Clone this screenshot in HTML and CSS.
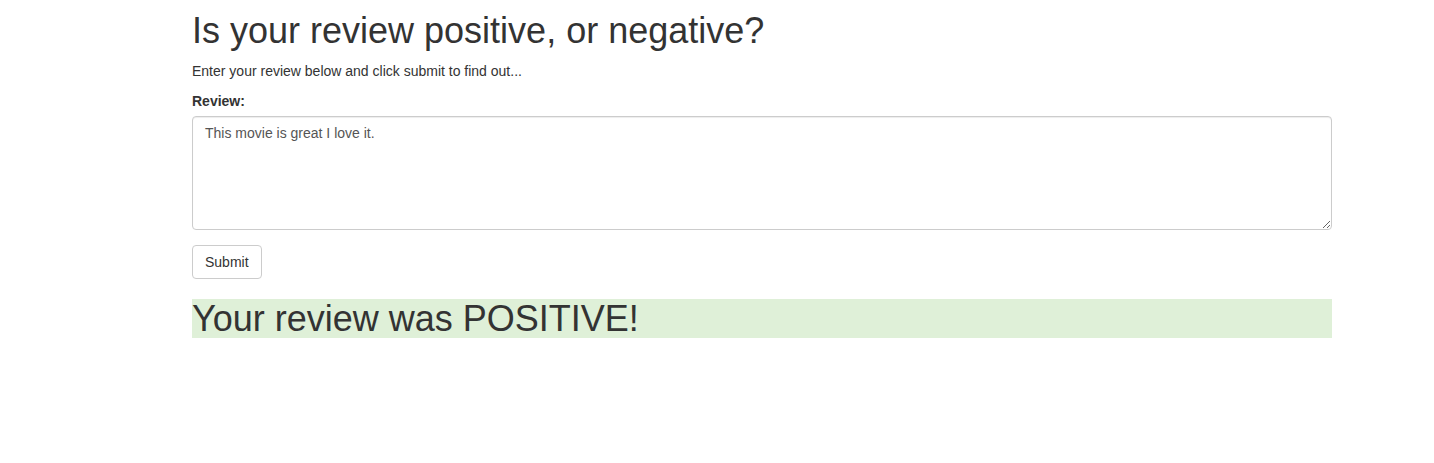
FILE: index.html
```html
<!DOCTYPE html>
<html>
<head>
<meta charset="utf-8">
<link rel="stylesheet" href="styles.css">
</head>
<body>
<div class="container">
  <h1 class="title">Is your review positive, or negative?</h1>
  <p class="lead-text">Enter your review below and click submit to find out...</p>
  <form class="review-form">
    <div class="form-group">
      <label class="form-label" for="review">Review:</label>
      <textarea id="review" class="form-control" rows="5">This movie is great I love it.</textarea>
    </div>
    <button type="button" class="btn">Submit</button>
  </form>
  <h1 class="result">Your review was POSITIVE!</h1>
</div>
</body>
</html>
```

FILE: styles.css
```css
* { box-sizing: border-box; }
html, body { margin: 0; padding: 0; background: #fff; }
body {
  font-family: "Liberation Sans", Arial, Helvetica, sans-serif;
  font-size: 14px;
  line-height: 20px;
  color: #333;
}
.container {
  width: 1140px;
  margin-left: 192px;
}
.title {
  font-size: 36px;
  font-weight: 500;
  line-height: 1.1;
  margin: 11px 0 10px;
}
.lead-text {
  margin: 0 0 10px;
}
.review-form { margin: 0; }
.form-group { margin-bottom: 15px; }
.form-label {
  display: block;
  font-weight: bold;
  margin-bottom: 5px;
}
.form-control {
  display: block;
  width: 100%;
  padding: 6px 12px;
  font-family: inherit;
  font-size: 14px;
  line-height: 20px;
  color: #555;
  background: #fff;
  border: 1px solid #ccc;
  border-radius: 4px;
  box-shadow: inset 0 1px 1px rgba(0,0,0,.075);
  margin: 0;
}
.btn {
  display: inline-block;
  padding: 6px 12px;
  font-family: inherit;
  font-size: 14px;
  line-height: 20px;
  color: #333;
  background: #fff;
  border: 1px solid #ccc;
  border-radius: 4px;
  margin: 0;
  cursor: pointer;
}
.result {
  font-size: 36px;
  font-weight: 500;
  line-height: 1.1;
  margin: 20px 0 10px;
  background: #dff0d8;
}
```
